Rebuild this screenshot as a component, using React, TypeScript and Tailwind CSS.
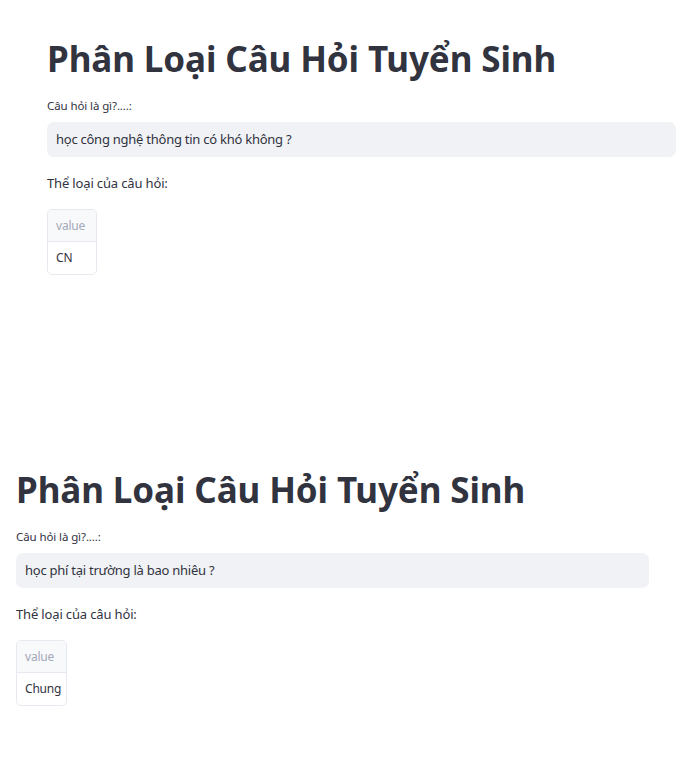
const font = { fontFamily: '"Noto Sans", "Open Sans", sans-serif' };

type Block = {
  question: string;
  answer: string;
  pad: string;
  inputWidth: string;
  tableWidth: string;
};

const blocks: Block[] = [
  {
    question: 'học công nghệ thông tin có khó không ?',
    answer: 'CN',
    pad: 'pl-[47px]',
    inputWidth: 'w-[629px]',
    tableWidth: 'w-[50px]'
  },
  {
    question: 'học phí tại trường là bao nhiêu ?',
    answer: 'Chung',
    pad: 'pl-[16px]',
    inputWidth: 'w-[633px]',
    tableWidth: 'w-[51px]'
  }
];

function ClassifierBlock({ block }: { block: Block }) {
  return (
    <section className={`h-[431px] pt-[41px] ${block.pad} text-[#31333f]`}>
      {/* Title */}
      <h1 className="h-[35px] text-[35px] leading-[35px] font-bold tracking-[-0.1px] whitespace-nowrap">
        Phân Loại Câu Hỏi Tuyển Sinh
      </h1>

      {/* Text input */}
      <label className="block mt-[22px] h-[16px] text-[11.5px] leading-[16px] tracking-[-0.1px]">
        Câu hỏi là gì?....:
      </label>
      <div
        className={`mt-[8px] h-[35px] ${block.inputWidth} rounded-[7px] bg-[#f0f2f6] flex items-center px-[9px] text-[13px] tracking-[-0.25px]`}
      >
        {block.question}
      </div>

      {/* Result */}
      <p className="mt-[16px] h-[20px] text-[13px] leading-[20px] tracking-[-0.15px]">Thể loại của câu hỏi:</p>
      <div
        className={`mt-[16px] ${block.tableWidth} rounded-[5px] border border-[#e6e9ef] overflow-hidden text-[12px] tracking-[-0.2px]`}
      >
        <div className="h-[32px] bg-[#f8f9fb] border-b border-[#e6e9ef] flex items-center px-[8px] text-[#a3a8b8]">
          value
        </div>
        <div className="h-[32px] flex items-center px-[8px]">{block.answer}</div>
      </div>
    </section>
  );
}

export default function App() {
  return (
    <div className="w-[697px] h-[767px] bg-white overflow-hidden" style={font}>
      {blocks.map((b, i) => (
        <ClassifierBlock key={i} block={b} />
      ))}
    </div>
  );
}
